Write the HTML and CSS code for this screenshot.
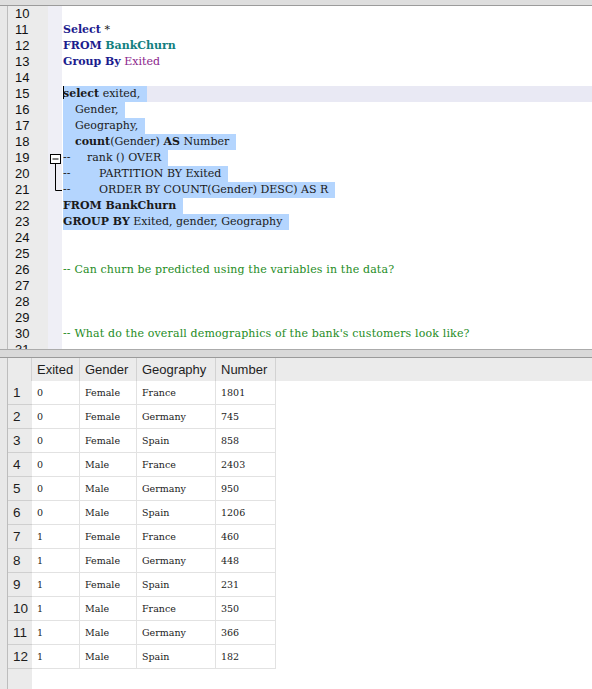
FILE: index.html
```html
<!DOCTYPE html>
<html>
<head>
<meta charset="utf-8">
<link rel="stylesheet" href="styles.css">
</head>
<body>
<div class="app">
  <div class="topbar"></div>
  <div class="editor">
    <div class="strip"></div>
    <div class="gutter">
      <div>10</div><div>11</div><div>12</div><div>13</div><div>14</div><div>15</div><div>16</div><div>17</div><div>18</div><div>19</div><div>20</div><div>21</div><div>22</div><div>23</div><div>24</div><div>25</div><div>26</div><div>27</div><div>28</div><div>29</div><div>30</div><div>31</div>
    </div>
    <div class="fold">
      <svg class="foldmark" width="14" height="50" viewBox="0 0 14 50">
        <rect x="2.5" y="0.5" width="10" height="9" fill="#fff" stroke="#000" stroke-width="1"/>
        <line x1="4.5" y1="5" x2="10.5" y2="5" stroke="#000" stroke-width="1"/>
        <line x1="7.5" y1="10" x2="7.5" y2="36.5" stroke="#000" stroke-width="1"/>
        <line x1="7.5" y1="36.5" x2="14" y2="36.5" stroke="#000" stroke-width="1"/>
      </svg>
    </div>
    <div class="code">
      <div class="ln"></div>
      <div class="ln"><span class="kw">Select</span> *</div>
      <div class="ln"><span class="kw">FROM</span> <span class="tbl">BankChurn</span></div>
      <div class="ln"><span class="kw">Group By</span> <span class="col">Exited</span></div>
      <div class="ln"></div>
      <div class="ln cur"><span class="sel"><span class="caret"></span><b>select</b> exited,</span></div>
      <div class="ln"><span class="sel"><span class="ind"></span>Gender,</span></div>
      <div class="ln"><span class="sel"><span class="ind"></span>Geography,</span></div>
      <div class="ln"><span class="sel"><span class="ind"></span><b>count</b>(Gender) <b>AS</b> Number</span></div>
      <div class="ln"><span class="sel"><span class="dash">--</span>rank () OVER</span></div>
      <div class="ln"><span class="sel"><span class="dash wide">--</span>PARTITION BY Exited</span></div>
      <div class="ln"><span class="sel"><span class="dash wide">--</span>ORDER BY COUNT(Gender) DESC) AS R</span></div>
      <div class="ln"><span class="sel"><b>FROM BankChurn</b></span></div>
      <div class="ln"><span class="sel"><b>GROUP BY</b> Exited, gender, Geography</span></div>
      <div class="ln"></div>
      <div class="ln"></div>
      <div class="ln"><span class="cmt">-- Can churn be predicted using the variables in the data?</span></div>
      <div class="ln"></div>
      <div class="ln"></div>
      <div class="ln"></div>
      <div class="ln"><span class="cmt">-- What do the overall demographics of the bank's customers look like?</span></div>
      <div class="ln"></div>
    </div>
  </div>
  <div class="splitter"></div>
  <div class="results">
    <div class="strip"></div>
    <div class="grid">
      <div class="h rn"></div><div class="h">Exited</div><div class="h">Gender</div><div class="h">Geography</div><div class="h">Number</div><div class="h fill"></div>

      <div class="rn">1</div><div class="c">0</div><div class="c">Female</div><div class="c">France</div><div class="c">1801</div><div class="e"></div>
      <div class="rn">2</div><div class="c">0</div><div class="c">Female</div><div class="c">Germany</div><div class="c">745</div><div class="e"></div>
      <div class="rn">3</div><div class="c">0</div><div class="c">Female</div><div class="c">Spain</div><div class="c">858</div><div class="e"></div>
      <div class="rn">4</div><div class="c">0</div><div class="c">Male</div><div class="c">France</div><div class="c">2403</div><div class="e"></div>
      <div class="rn">5</div><div class="c">0</div><div class="c">Male</div><div class="c">Germany</div><div class="c">950</div><div class="e"></div>
      <div class="rn">6</div><div class="c">0</div><div class="c">Male</div><div class="c">Spain</div><div class="c">1206</div><div class="e"></div>
      <div class="rn">7</div><div class="c">1</div><div class="c">Female</div><div class="c">France</div><div class="c">460</div><div class="e"></div>
      <div class="rn">8</div><div class="c">1</div><div class="c">Female</div><div class="c">Germany</div><div class="c">448</div><div class="e"></div>
      <div class="rn">9</div><div class="c">1</div><div class="c">Female</div><div class="c">Spain</div><div class="c">231</div><div class="e"></div>
      <div class="rn">10</div><div class="c">1</div><div class="c">Male</div><div class="c">France</div><div class="c">350</div><div class="e"></div>
      <div class="rn">11</div><div class="c">1</div><div class="c">Male</div><div class="c">Germany</div><div class="c">366</div><div class="e"></div>
      <div class="rn">12</div><div class="c">1</div><div class="c">Male</div><div class="c">Spain</div><div class="c">182</div><div class="e"></div>
      <div class="rn tail"></div><div class="e tail"></div><div class="e tail"></div><div class="e tail"></div><div class="e tail"></div><div class="e tail"></div>
    </div>
  </div>
</div>
</body>
</html>
```

FILE: styles.css
```css
* { box-sizing: border-box; }
html, body { margin: 0; padding: 0; }
body {
  width: 592px;
  height: 689px;
  overflow: hidden;
  background: #e6e6e6;
  font-family: "Liberation Sans", Arial, sans-serif;
}
.app {
  display: flex;
  flex-direction: column;
  height: 689px;
}
.topbar {
  height: 6px;
  background: #dedede;
  border-bottom: 1px solid #9b9b9b;
}
.editor {
  height: 343px;
  display: flex;
  background: #fff;
  overflow: hidden;
}
.strip {
  width: 8px;
  flex: none;
  background: #e8e8e8;
  border-right: 1px solid #bdbdbd;
}
.gutter {
  width: 40px;
  flex: none;
  background: #ebebeb;
  font-size: 13px;
  color: #111;
  padding-left: 7px;
}
.gutter div {
  height: 16px;
  line-height: 16px;
}
.fold {
  width: 14px;
  flex: none;
  background: #efeff6;
  position: relative;
}
.foldmark {
  position: absolute;
  left: 0;
  top: 148px;
}
.code {
  flex: 1;
  padding-left: 1px;
  font-family: "DejaVu Serif", "Liberation Serif", serif;
  font-size: 11px;
  color: #1a1a1a;
}
.ln {
  height: 16px;
  line-height: 16px;
  white-space: pre;
}
.ln.cur { background: #e9e9f4; }
.kw { color: #1c1c8e; font-weight: bold; }
.tbl { color: #128080; font-weight: bold; }
.col { color: #8c1e8c; }
.cmt { color: #1e8c1e; letter-spacing: 0.15px; }
.sel {
  display: inline-block;
  height: 16px;
  background: #b4d5fe;
  padding-right: 7px;
  position: relative;
}
.caret {
  display: inline-block;
  width: 1px;
  height: 13px;
  background: #000;
  vertical-align: -2px;
  margin-right: -1px;
}
.ind { display: inline-block; width: 12px; }
.dash { display: inline-block; width: 24px; }
.dash.wide { width: 36px; }
.splitter {
  height: 9px;
  background: #d9d9d9;
  border-top: 1px solid #ababab;
  border-bottom: 1px solid #9a9a9a;
}
.results {
  flex: 1;
  display: flex;
  background: #fff;
  overflow: hidden;
}
.grid {
  flex: 1;
  display: grid;
  grid-template-columns: 24px 48px 57px 79px 60px 1fr;
  grid-template-rows: 23px repeat(12, 24px) 1fr;
}
.h {
  background: #ebebeb;
  font-size: 13px;
  color: #1e1e1e;
  line-height: 23px;
  padding-left: 5px;
  border-right: 1px solid #d2d2d2;
}
.h.fill { border-right: none; }
.rn {
  background: #ebebeb;
  font-size: 13.5px;
  color: #1e1e1e;
  line-height: 24px;
  padding-left: 5px;
  border-bottom: 1px solid #cfcfcf;
}
.h.rn { border-bottom: none; }
.rn.tail { border-bottom: none; }
.c {
  font-family: "DejaVu Serif", "Liberation Serif", serif;
  font-size: 9.5px;
  color: #222;
  line-height: 23px;
  padding-left: 5px;
  border-right: 1px solid #e2e2e2;
  border-bottom: 1px solid #e2e2e2;
}
.e { background: #fff; }
```
